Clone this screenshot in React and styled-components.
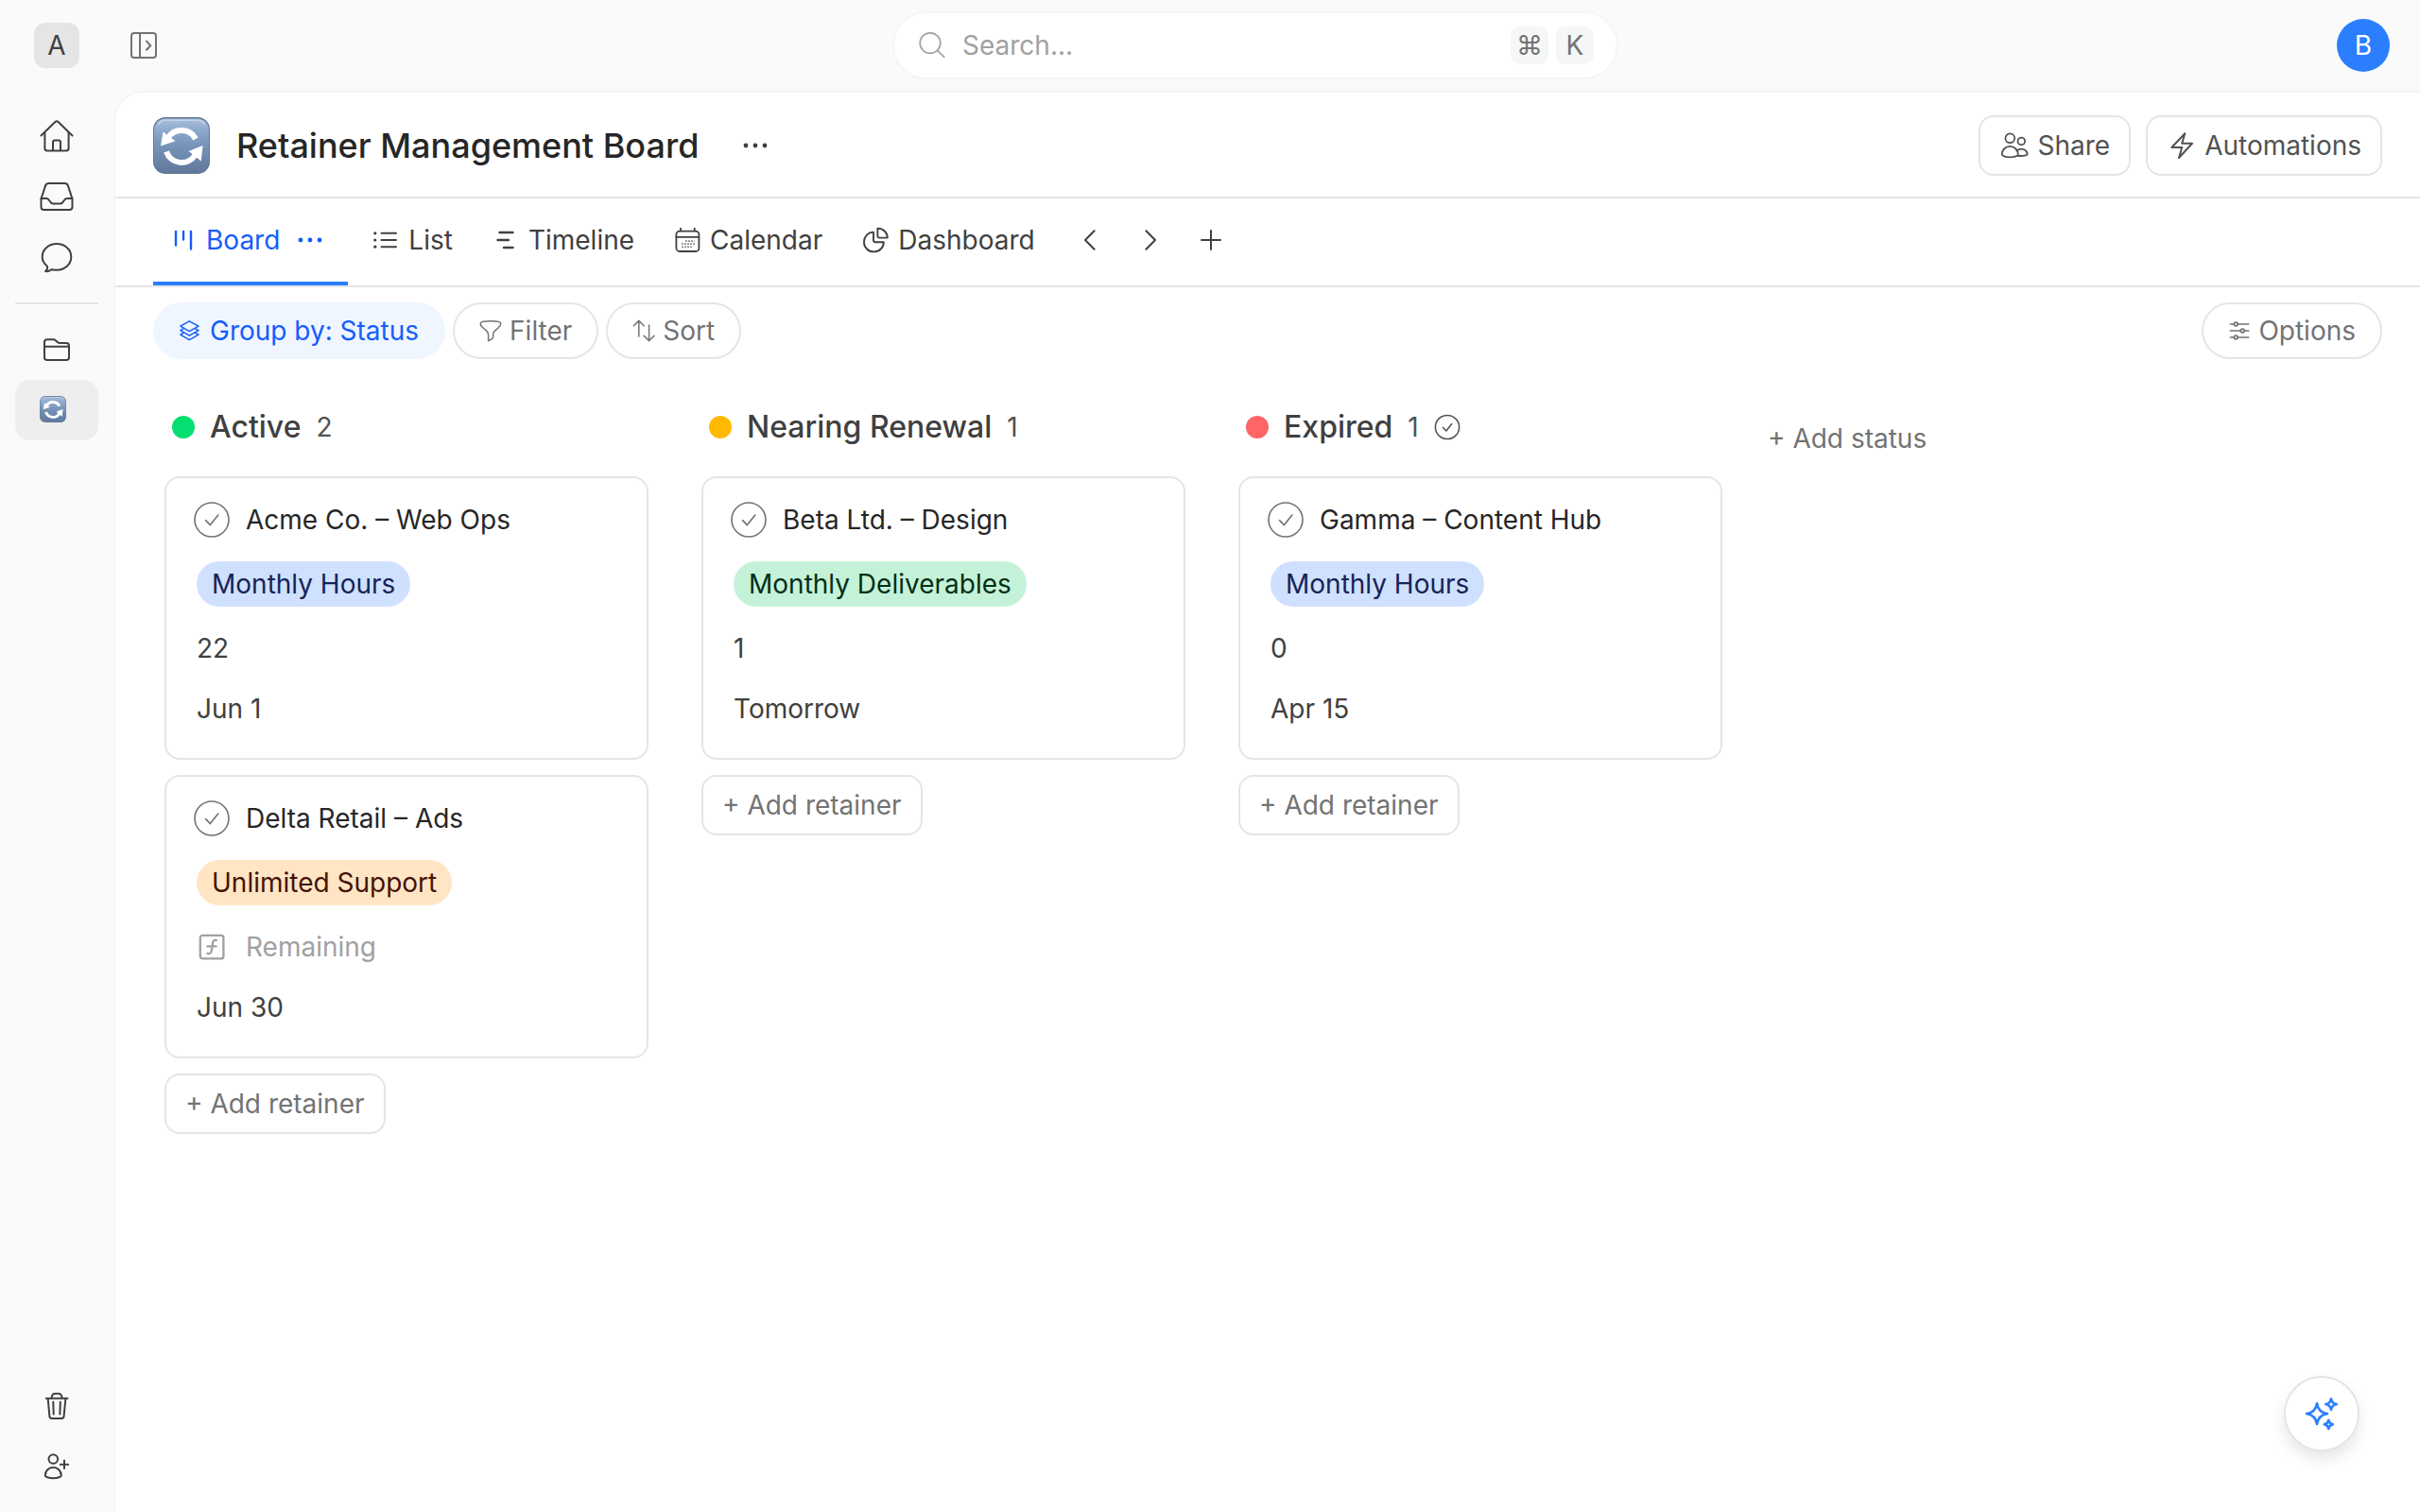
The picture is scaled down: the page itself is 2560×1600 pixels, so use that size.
import React from "react";
import styled, { createGlobalStyle } from "styled-components";

const columns = [
  {
    name: "Active",
    color: "#05df72",
    cards: [
      { title: "Acme Co. – Web Ops", type: "Monthly Hours", tone: "blue", remaining: "22", date: "Jun 1" },
      { title: "Delta Retail – Ads", type: "Unlimited Support", tone: "orange", date: "Jun 30" }
    ]
  },
  {
    name: "Nearing Renewal",
    color: "#ffb900",
    cards: [
      { title: "Beta Ltd. – Design", type: "Monthly Deliverables", tone: "green", remaining: "1", date: "Tomorrow" }
    ]
  },
  {
    name: "Expired",
    color: "#ff6467",
    done: true,
    cards: [
      { title: "Gamma – Content Hub", type: "Monthly Hours", tone: "blue", remaining: "0", date: "Apr 15" }
    ]
  }
];

const tones = {
  blue: { background: "#d0e0ff", color: "#162456" },
  green: { background: "#c4f2d9", color: "#032e15" },
  orange: { background: "#ffe5c4", color: "#441306" }
};

const Icon = ({ size = 32, stroke = 2, children }) => (
  <Svg
    width={size}
    height={size}
    viewBox={`0 0 ${size} ${size}`}
    strokeWidth={stroke}
    aria-hidden="true"
  >
    {children}
  </Svg>
);

const HomeIcon = () => (
  <Icon size={36}>
    <path d="M1.5 17.5 16.4 3Q18 1.4 19.6 3L34.5 17.5" />
    <path d="M5.4 14.5V31Q5.4 33.4 7.8 33.4H28.2Q30.6 33.4 30.6 31V14.5" />
    <path d="M14 33V24.5Q14 22.4 16 22.4H20Q22 22.4 22 24.5V33" />
  </Icon>
);

const InboxIcon = () => (
  <Icon size={36}>
    <path d="M1.5 20.5 6 6.6Q6.9 4 9.6 4H26.4Q29.1 4 30 6.6L34.5 20.5V29Q34.5 32 31.5 32H4.5Q1.5 32 1.5 29Z" />
    <path d="M1.5 20H7.5C10.5 20 10.4 25.6 14 25.6H22C25.6 25.6 25.5 20 28.5 20H34.5" />
  </Icon>
);

const ChatIcon = () => (
  <Icon size={36}>
    <path d="M6 33C8.2 31.2 8.7 29.2 7.6 27.2C4.4 24.8 2.7 21.4 2.7 17.8C2.7 9.8 9.6 4 18 4S33.3 9.8 33.3 17.8S26.6 31.7 18 31.7C15.8 31.7 14 31.2 12.4 31.2C10.6 32.6 8 33.6 6 33Z" />
  </Icon>
);

const FolderIcon = () => (
  <Icon size={36}>
    <path d="M5 10Q5 7.2 7.8 7.2H14.4Q15.8 7.2 16.8 8.2L18.4 9.8Q19.5 10.9 21 10.9H28.2Q31 10.9 31 13.7V26.2Q31 29 28.2 29H7.8Q5 29 5 26.2Z" />
    <path d="M5 14.8H31" />
  </Icon>
);

const TrashIcon = () => (
  <Icon size={36}>
    <path d="M6.8 9.8H29.4" />
    <path d="M12.6 9.5Q13 4.8 16 4.8H20.2Q23.2 4.8 23.6 9.5" />
    <path d="M8.7 10 10.4 28.6Q10.6 31 13 31H23Q25.4 31 25.6 28.6L27.4 10" />
    <path d="M14.3 13.5 14.7 26.5M21.8 13.5 21.4 26.5" />
  </Icon>
);

const InviteIcon = () => (
  <Icon size={36}>
    <circle cx="14.3" cy="10" r="4.8" />
    <path d="M5.8 27.4C5.8 22.4 9.6 18.8 14.3 18.8S22.8 22.4 22.8 27.4C22.8 28.4 19.6 30.3 14.3 30.3S5.8 28.4 5.8 27.4Z" />
    <path d="M26 11.5V20M21.8 15.8H30.2" />
  </Icon>
);

const PanelIcon = () => (
  <Icon size={36}>
    <rect x="5" y="5" width="26" height="26" rx="3" />
    <path d="M14 5V31M21 13.6 25.3 18.2 21 22.8" />
  </Icon>
);

const SearchIcon = () => (
  <Icon stroke={1.7}>
    <circle cx="14" cy="13.6" r="10.8" />
    <path d="M21.6 21.4 28.8 28.4" />
  </Icon>
);

const DotsIcon = () => (
  <Icon>
    <g fill="currentColor" stroke="none">
      <circle cx="6" cy="16" r="2.4" />
      <circle cx="16" cy="16" r="2.4" />
      <circle cx="26" cy="16" r="2.4" />
    </g>
  </Icon>
);

const BoardIcon = () => (
  <Icon stroke={2.4}>
    <path d="M8 7V21.5M16 7V15.5M24 7V25.5" />
  </Icon>
);

const ListIcon = () => (
  <Icon>
    <path d="M11.5 8.8H27M11.5 16H27M11.5 23.2H27" />
    <g fill="currentColor" stroke="none">
      <circle cx="4.8" cy="8.8" r="1.6" />
      <circle cx="4.8" cy="16" r="1.6" />
      <circle cx="4.8" cy="23.2" r="1.6" />
    </g>
  </Icon>
);

const TimelineIcon = () => (
  <Icon stroke={2.4}>
    <path d="M9.5 8H23.5M7.5 16H19M14 24H23.5" />
  </Icon>
);

const CalendarIcon = () => (
  <Icon stroke={1.8}>
    <rect x="4.4" y="6.6" width="24" height="21.4" rx="3.5" />
    <path d="M4.4 12.8H28.4M9 3.6V6.6M23.8 3.6V6.6" />
    <path
      d="M14.2 17.2H23.7M10.2 20.2H23.7M10.2 23.4H20.7"
      strokeWidth="1.7"
      strokeDasharray="1.6 1.4"
      strokeLinecap="butt"
      opacity="0.75"
    />
  </Icon>
);

const DashboardIcon = () => (
  <Icon stroke={1.9}>
    <path d="M14 7.6V16Q14 18.2 16.2 18.2H24.8C24.8 24 20.2 28.4 14.4 28.4S4 24 4 18.2S8.4 7.6 14 7.6Z" />
    <path d="M18.4 3.6V11.8Q18.4 13.6 20.2 13.6H28.8C28.8 8 24.2 3.6 18.4 3.6Z" />
  </Icon>
);

const LeftIcon = () => (
  <Icon size={28}>
    <path d="M18.6 4.2 9 14 18.6 23.8" />
  </Icon>
);

const RightIcon = () => (
  <Icon size={28}>
    <path d="M9.4 4.2 19 14 9.4 23.8" />
  </Icon>
);

const PlusIcon = () => (
  <Icon size={28}>
    <path d="M14 4V24M4 14H24" />
  </Icon>
);

const LayersIcon = () => (
  <Icon size={24} stroke={1.5}>
    <path d="M10.3 1.8 20 7.2 10.3 12.6 .9 7.2Z" />
    <path d="M4 9.8.9 11.7 10.3 17.1 20 11.7 16.7 9.8" />
    <path d="M4 14.3.9 16.2 10.3 21.6 20 16.2 16.7 14.3" />
  </Icon>
);

const FilterIcon = () => (
  <Icon size={24} stroke={1.5}>
    <path d="M1.2 4.2Q1.2 1.8 12 1.8T22.8 4.2Q22.8 6.6 20 9L16 12.6Q14.6 14 14.6 16.4V18.6Q14.6 20.2 13.2 20.9L9.6 22.6V16.4Q9.6 14 8.2 12.6L4 9Q1.2 6.6 1.2 4.2Z" />
  </Icon>
);

const SortIcon = () => (
  <Icon size={24} stroke={1.5}>
    <path d="M6.8 18V1.4M1.4 6.8 6.8 1.4 12.2 6.8" />
    <path d="M17.6 6V22.6M12.2 17.2 17.6 22.6 23 17.2" />
  </Icon>
);

const SlidersIcon = () => (
  <Icon size={24} stroke={1.7}>
    <path d="M2.4 5H6.2M10.2 5H21.6M2.4 12H13.2M17.2 12H21.6M2.4 19H6.2M10.2 19H21.6" />
    <circle cx="8.2" cy="5" r="1.9" />
    <circle cx="15.2" cy="12" r="1.9" />
    <circle cx="8.2" cy="19" r="1.9" />
  </Icon>
);

const ShareIcon = () => (
  <Icon stroke={1.8}>
    <circle cx="11.3" cy="8.3" r="4.9" />
    <circle cx="23.3" cy="11.4" r="3.8" />
    <path d="M2.8 25.6C2.8 20.4 6.6 16.8 11.3 16.8S19.8 20.4 19.8 25.6C19.8 26.8 16.6 28.4 11.3 28.4S2.8 26.8 2.8 25.6Z" />
    <path d="M18.4 21.4C19.6 20.3 21.3 19.6 23.3 19.6C26.8 19.6 29.6 22.2 29.6 25.2C29.6 26.4 25.4 27.4 19.4 26.8" />
  </Icon>
);

const BoltIcon = () => (
  <Icon>
    <path d="M19.3 3.2 5.4 18H16.2L13 29 27 13.8H16.2Z" />
  </Icon>
);

const CheckIcon = ({ size = 40 }) => (
  <Svg width={size} height={size} viewBox="0 0 40 40" strokeWidth={size < 40 ? 2.2 : 1.6} aria-hidden="true">
    <circle cx="20" cy="20" r="18" />
    <path d="M13.6 20.6 18.4 25.6 26.8 15" />
  </Svg>
);

const FormulaIcon = () => (
  <Icon stroke={2.3}>
    <rect x="3.8" y="3.8" width="24.6" height="24.6" rx="2.5" />
    <path d="M21 9C18.4 8.2 17.4 9.6 17 12L15.8 19.8C15.4 22.4 14 23.8 11.4 23M11.4 15.4H20.6" />
  </Icon>
);

const SparkleIcon = () => (
  <Icon size={40} stroke={2.6}>
    <path d="M15 9Q16.4 18.6 26 20Q16.4 21.4 15 31Q13.6 21.4 4 20Q13.6 18.6 15 9Z" />
    <path d="M30 4.2Q30.8 9.2 35.8 10Q30.8 10.8 30 15.8Q29.2 10.8 24.2 10Q29.2 9.2 30 4.2Z" />
    <path d="M27.3 26.7Q28 30.6 31.9 31.3Q28 32 27.3 35.9Q26.6 32 22.7 31.3Q26.6 30.6 27.3 26.7Z" />
  </Icon>
);

const RefreshLogo = ({ size }) => (
  <svg width={size} height={size} viewBox="0 0 60 60" aria-hidden="true">
    <defs>
      <linearGradient id={`refresh-${size}`} x1="0" y1="0" x2="0" y2="1">
        <stop offset="0" stopColor="#a9bedb" />
        <stop offset="0.24" stopColor="#8ba7cb" />
        <stop offset="0.5" stopColor="#7694b8" />
        <stop offset="1" stopColor="#60789c" />
      </linearGradient>
    </defs>
    <rect width="60" height="60" rx="13" fill="#5f7693" />
    <rect x="1" y="1.5" width="58" height="57.5" rx="12" fill={`url(#refresh-${size})`} />
    <path d="M6 8Q7 3.5 12 3.2H48Q53 3.5 54 8" fill="none" stroke="#c3d3ea" strokeWidth="1.6" />
    <g fill="none" stroke="#fff" strokeWidth="6">
      <path d="M15.5 22A17 17 0 0 1 45 23" />
      <path d="M44.5 40A17 17 0 0 1 14 36.5" />
    </g>
    <path d="M10.5 15.5 8 30.5 23.5 25.2Z" fill="#fff" />
    <path d="M52.5 30 37.5 36 50.8 46.5Z" fill="#fff" />
  </svg>
);

const Card = ({ card }) => (
  <CardBox>
    <CardTitle>
      <CheckButton aria-label={`Complete ${card.title}`}>
        <CheckIcon />
      </CheckButton>
      <h3>{card.title}</h3>
    </CardTitle>
    <TagRow>
      <Tag $tone={tones[card.tone]}>{card.type}</Tag>
    </TagRow>
    {card.remaining ? (
      <Field>{card.remaining}</Field>
    ) : (
      <Field $empty>
        <FormulaIcon />
        Remaining
      </Field>
    )}
    <Field>{card.date}</Field>
  </CardBox>
);

export default function App() {
  return (
    <Page>
      <GlobalStyle />
      <TopBar>
        <TopLeft>
          <Workspace aria-label="Workspace A">A</Workspace>
          <Toggle aria-label="Expand sidebar">
            <PanelIcon />
          </Toggle>
        </TopLeft>
        <SearchArea>
          <Search>
            <SearchIcon />
            <input type="text" placeholder="Search..." aria-label="Search" />
            <Keys>
              <kbd>⌘</kbd>
              <kbd>K</kbd>
            </Keys>
          </Search>
        </SearchArea>
        <Avatar aria-label="Account">B</Avatar>
      </TopBar>

      <Body>
        <Sidebar>
          <SideLink href="#home" aria-label="Home"><HomeIcon /></SideLink>
          <SideLink href="#inbox" aria-label="Inbox"><InboxIcon /></SideLink>
          <SideLink href="#chat" aria-label="Chat"><ChatIcon /></SideLink>
          <Divider />
          <SideLink href="#files" aria-label="Files"><FolderIcon /></SideLink>
          <SideLink href="#retainers" aria-label="Retainers" $active><RefreshLogo size={28} /></SideLink>
          <Spacer />
          <SideLink href="#trash" aria-label="Trash"><TrashIcon /></SideLink>
          <SideLink href="#invite" aria-label="Invite"><InviteIcon /></SideLink>
        </Sidebar>

        <Panel>
          <Header>
            <RefreshLogo size={60} />
            <h1>Retainer Management Board</h1>
            <IconButton aria-label="Board menu"><DotsIcon /></IconButton>
            <Actions>
              <ActionButton><ShareIcon />Share</ActionButton>
              <ActionButton><BoltIcon />Automations</ActionButton>
            </Actions>
          </Header>

          <Tabs>
            <Tab $active>
              <a href="#board"><BoardIcon />Board</a>
              <TabMenu aria-label="View menu"><DotsIcon /></TabMenu>
            </Tab>
            <Tab><a href="#list"><ListIcon />List</a></Tab>
            <Tab><a href="#timeline"><TimelineIcon />Timeline</a></Tab>
            <Tab><a href="#calendar"><CalendarIcon />Calendar</a></Tab>
            <Tab><a href="#dashboard"><DashboardIcon />Dashboard</a></Tab>
            <TabControls>
              <IconButton aria-label="Previous view"><LeftIcon /></IconButton>
              <IconButton aria-label="Next view"><RightIcon /></IconButton>
              <IconButton aria-label="Add view"><PlusIcon /></IconButton>
            </TabControls>
          </Tabs>

          <Toolbar>
            <Pill $active><LayersIcon />Group by: Status</Pill>
            <Pill><FilterIcon />Filter</Pill>
            <Pill><SortIcon />Sort</Pill>
            <Spacer />
            <Pill><SlidersIcon />Options</Pill>
          </Toolbar>

          <Board>
            {columns.map(column => (
              <Column key={column.name}>
                <ColumnHeader>
                  <Dot $color={column.color} />
                  <h2>{column.name}</h2>
                  <span>{column.cards.length}</span>
                  {column.done && <CheckIcon size={28} />}
                </ColumnHeader>
                {column.cards.map(card => (
                  <Card key={card.title} card={card} />
                ))}
                <AddButton>+ Add retainer</AddButton>
              </Column>
            ))}
            <AddStatus>+ Add status</AddStatus>
          </Board>
        </Panel>
      </Body>

      <Assistant aria-label="Assistant">
        <SparkleIcon />
      </Assistant>
    </Page>
  );
}

const GlobalStyle = createGlobalStyle`
  * {
    box-sizing: border-box;
  }

  body {
    margin: 0;
    background: #fafafa;
    color: #404040;
    font-family: Inter, "Liberation Sans", sans-serif;
    font-size: 28px;
    line-height: 40px;
  }

  h1, h2, h3 {
    margin: 0;
    font-weight: 400;
    white-space: nowrap;
  }

  button, input {
    padding: 0;
    border: none;
    background: none;
    color: inherit;
    font: inherit;
  }

  button {
    cursor: pointer;
    white-space: nowrap;
  }

  a {
    color: inherit;
    text-decoration: none;
  }
`;

const Svg = styled.svg`
  flex: none;
  fill: none;
  stroke: currentColor;
  stroke-linecap: round;
  stroke-linejoin: round;
`;

const Page = styled.div`
  display: flex;
  flex-direction: column;
  min-height: 100vh;
`;

const TopBar = styled.header`
  display: flex;
  align-items: center;
  height: 96px;
  padding-right: 32px;
`;

const TopLeft = styled.div`
  display: flex;
  align-items: center;
  gap: 36px;
  width: 184px;
  padding-left: 36px;
`;

const Workspace = styled.button`
  width: 48px;
  height: 48px;
  border-radius: 12px;
  background: #e5e5e5;
`;

const Toggle = styled.button`
  display: flex;
  align-items: center;
  justify-content: center;
  width: 64px;
  height: 64px;
  color: #737373;
`;

const SearchArea = styled.div`
  display: flex;
  flex: 1;
  justify-content: center;
`;

const Search = styled.label`
  display: flex;
  flex: 0 1 768px;
  align-items: center;
  gap: 16px;
  height: 72px;
  padding: 0 24px;
  border: 2px solid #f5f5f5;
  border-radius: 36px;
  background: #fff;
  color: #a1a1a1;

  input {
    flex: 1;
    min-width: 0;
    outline: none;
  }

  input::placeholder {
    color: #a1a1a1;
    opacity: 1;
  }
`;

const Keys = styled.span`
  display: flex;
  gap: 8px;

  kbd {
    width: 40px;
    height: 40px;
    border-radius: 10px;
    background: #f5f7f6;
    color: #737373;
    font-family: inherit;
    text-align: center;
  }
`;

const Avatar = styled.button`
  width: 56px;
  height: 56px;
  border-radius: 50%;
  background: #2b7fff;
  color: #fff;
`;

const Body = styled.div`
  display: flex;
  flex: 1;
`;

const Sidebar = styled.nav`
  display: flex;
  flex-direction: column;
  flex: none;
  width: 120px;
  padding: 16px;
`;

const SideLink = styled.a`
  display: flex;
  align-items: center;
  justify-content: center;
  height: 64px;
  padding: ${({ $active }) => ($active ? "0 8px 2px 0" : "0")};
  border-radius: 16px;
  background: ${({ $active }) => ($active ? "#eeeeee" : "transparent")};
`;

const Divider = styled.hr`
  width: 100%;
  height: 2px;
  margin: 16px 0;
  border: none;
  background: #e5e5e5;
`;

const Spacer = styled.div`
  flex: 1;
`;

const Panel = styled.main`
  flex: 1;
  min-width: 0;
  border: solid #f5f5f5;
  border-width: 2px 0 0 2px;
  border-top-left-radius: 32px;
  background: #fff;
`;

const Header = styled.div`
  display: flex;
  align-items: center;
  height: 112px;
  padding: 2px 40px 0;
  border-bottom: 2px solid #e5e5e5;

  h1 {
    margin: 0 28px;
    color: #262626;
    font-size: 36px;
    font-weight: 500;
  }
`;

const IconButton = styled.button`
  display: flex;
  align-items: center;
  justify-content: center;
  width: 64px;
  height: 64px;
`;

const Actions = styled.div`
  display: flex;
  gap: 16px;
  margin-left: auto;
`;

const ActionButton = styled.button`
  display: flex;
  align-items: center;
  gap: 8px;
  height: 64px;
  padding: 0 20px;
  border: 2px solid #e5e5e5;
  border-radius: 16px;
  color: #525252;
`;

const Tabs = styled.nav`
  display: flex;
  gap: 8px;
  height: 94px;
  padding: 0 40px;
  border-bottom: 2px solid #e5e5e5;
`;

const Tab = styled.div`
  display: flex;
  align-items: center;
  gap: 8px;
  padding: 0 16px;
  border-bottom: 4px solid ${({ $active }) => ($active ? "#2b7fff" : "transparent")};
  color: ${({ $active }) => ($active ? "#155dfc" : "#404040")};

  a {
    display: flex;
    align-items: center;
    gap: 8px;
  }
`;

const TabMenu = styled(IconButton)`
  width: 48px;
  height: 48px;
`;

const TabControls = styled.div`
  display: flex;
  align-items: center;
  padding: 0 2px 4px;
`;

const Toolbar = styled.div`
  display: flex;
  gap: 8px;
  padding: 16px 40px;
`;

const Pill = styled.button`
  display: flex;
  align-items: center;
  gap: 8px;
  height: 60px;
  padding: 0 26px;
  border: 2px solid ${({ $active }) => ($active ? "#eff6ff" : "#e5e5e5")};
  border-radius: 30px;
  background: ${({ $active }) => ($active ? "#eff6ff" : "#fff")};
  color: ${({ $active }) => ($active ? "#155dfc" : "#737373")};
`;

const Board = styled.div`
  display: flex;
  align-items: flex-start;
  gap: 40px;
  padding: 24px 44px;
`;

const Column = styled.section`
  display: flex;
  flex-direction: column;
  align-items: flex-start;
  flex: none;
  gap: 16px;
  width: 528px;
  padding: 0 8px;
`;

const ColumnHeader = styled.div`
  display: flex;
  align-items: center;
  gap: 16px;
  height: 64px;
  margin-bottom: 4px;
  padding: 0 8px;
  color: #525252;

  h2 {
    color: #404040;
    font-size: 32px;
    font-weight: 500;
  }
`;

const Dot = styled.span`
  width: 24px;
  height: 24px;
  border-radius: 50%;
  background: ${({ $color }) => $color};
`;

const CardBox = styled.article`
  width: 100%;
  padding: 20px 28px;
  border: 2px solid #e5e5e5;
  border-radius: 16px;
  background: #fff;
`;

const CardTitle = styled.div`
  display: flex;
  align-items: center;
  gap: 16px;
  height: 48px;
  margin-bottom: 8px;
  color: #262626;

  h3 {
    font-size: 28px;
  }
`;

const CheckButton = styled.button`
  display: flex;
  color: #737373;
`;

const TagRow = styled.div`
  display: flex;
  align-items: center;
  height: 72px;
  padding: 0 4px;
`;

const Tag = styled.span`
  height: 48px;
  padding: 0 16px;
  border-radius: 24px;
  background: ${({ $tone }) => $tone.background};
  color: ${({ $tone }) => $tone.color};
  line-height: 48px;
`;

const Field = styled.div`
  display: flex;
  align-items: center;
  gap: 20px;
  height: 64px;
  padding: 0 4px;
  color: ${({ $empty }) => ($empty ? "#a1a1a1" : "#404040")};
`;

const AddButton = styled.button`
  height: 64px;
  padding: 0 20px;
  border: 2px solid #e5e5e5;
  border-radius: 16px;
  color: #737373;
`;

const AddStatus = styled.button`
  height: 64px;
  margin-top: 12px;
  color: #737373;
`;

const Assistant = styled.button`
  position: fixed;
  right: 64px;
  bottom: 64px;
  display: flex;
  align-items: center;
  justify-content: center;
  width: 80px;
  height: 80px;
  border: 2px solid #e5e5e5;
  border-radius: 50%;
  background: #fff;
  color: #2b7fff;
  box-shadow: 0 8px 16px rgba(0, 0, 0, 0.1);
`;
